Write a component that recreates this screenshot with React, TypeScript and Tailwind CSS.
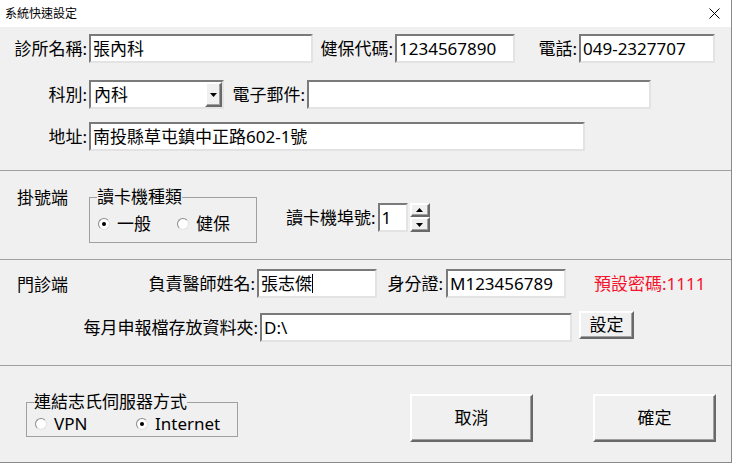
import type { ReactNode } from "react";

// 共用樣式：凹陷輸入框、凸起按鈕
const sunken =
  "bg-white border-2 border-t-[#7a7a7a] border-l-[#7a7a7a] border-r-[#e3e3e3] border-b-[#e3e3e3]";
const raised =
  "bg-[#f0f0f0] border-2 border-t-[#ffffff] border-l-[#ffffff] border-r-[#696969] border-b-[#696969] shadow-[inset_-1px_-1px_0_#a0a0a0]";

function Label({ children, className = "" }: { children: ReactNode; className?: string }) {
  return (
    <div className={`flex justify-end pr-[2px] text-[17px] leading-[20px] whitespace-nowrap ${className}`}>
      {children}
    </div>
  );
}

function TextBox({
  value,
  className = "",
  caret = false,
}: {
  value?: string;
  className?: string;
  caret?: boolean;
}) {
  return (
    <div className={`${sunken} h-[29px] flex items-center pl-[2px] text-[17px] leading-[20px] whitespace-nowrap ${className}`}>
      {value}
      {caret && <span className="w-px h-[19px] bg-black" />}
    </div>
  );
}

function Radio({ label, checked }: { label: string; checked?: boolean }) {
  return (
    <div className="flex items-center gap-[7px]">
      <span className="w-[12px] h-[12px] rounded-full bg-white border border-t-[#8a8a8a] border-l-[#8a8a8a] border-r-[#e0e0e0] border-b-[#e0e0e0] flex items-center justify-center">
        {checked && <span className="w-[4px] h-[4px] rounded-full bg-black" />}
      </span>
      <span className="text-[17px] leading-[20px]">{label}</span>
    </div>
  );
}

function Arrow({ up = false }: { up?: boolean }) {
  return (
    <svg width="7" height="4" viewBox="0 0 7 4" className="block">
      {up ? <path d="M3.5 0 L7 4 L0 4 Z" fill="#000" /> : <path d="M0 0 L7 0 L3.5 4 Z" fill="#000" />}
    </svg>
  );
}

function Divider() {
  return <div className="h-px bg-[#a0a0a0] w-full" />;
}

export default function App() {
  return (
    <div className="w-[734px] h-[465px] bg-white font-['Noto_Sans','Noto_Sans_CJK_TC',sans-serif] text-black">
      <div className="w-[732px] h-[463px] border-r border-b border-[#8a8a8a] flex flex-col">
        {/* 標題列 */}
        <div className="h-[27px] bg-white flex items-center justify-between pl-[5px] pr-[11px] shrink-0">
          <span className="text-[12px] leading-none">系統快速設定</span>
          <svg width="11" height="11" viewBox="0 0 11 11">
            <path d="M0.5 0.5 L10.5 10.5 M10.5 0.5 L0.5 10.5" stroke="#000" strokeWidth="1" />
          </svg>
        </div>

        <div className="flex-1 bg-[#f0f0f0] flex flex-col">
          {/* 診所基本資料 */}
          <div className="h-[143px] pt-[7px] shrink-0">
            <div className="flex items-center h-[29px]">
              <Label className="w-[89px]">診所名稱:</Label>
              <TextBox className="w-[224px]" value="張內科" />
              <Label className="w-[82px]">健保代碼:</Label>
              <TextBox className="w-[120px]" value="1234567890" />
              <Label className="w-[64px]">電話:</Label>
              <TextBox className="w-[136px]" value="049-2327707" />
            </div>
            <div className="flex items-center h-[29px] mt-[17px]">
              <Label className="w-[89px]">科別:</Label>
              <div className={`${sunken} w-[135px] h-[29px] flex`}>
                <div className="flex-1 flex items-center pl-[3px] text-[17px] leading-[20px]">內科</div>
                <div className={`${raised} w-[17px] h-full flex items-center justify-center`}>
                  <Arrow />
                </div>
              </div>
              <Label className="w-[83px]">電子郵件:</Label>
              <TextBox className="w-[344px]" />
            </div>
            <div className="flex items-center h-[29px] mt-[13px]">
              <Label className="w-[89px]">地址:</Label>
              <TextBox className="w-[496px]" value="南投縣草屯鎮中正路602-1號" />
            </div>
          </div>
          <Divider />

          {/* 掛號端 */}
          <div className="h-[88px] flex items-start shrink-0">
            <div className="w-[89px] pl-[17px] mt-[17px] text-[17px] leading-[20px]">掛號端</div>
            <fieldset className="w-[168px] h-[55px] mt-[17px] border border-[#a0a0a0] px-[7px]">
              <legend className="text-[17px] leading-[18px]">讀卡機種類</legend>
              <div className="flex items-center mt-[8px] ml-[1px]">
                <Radio label="一般" checked />
                <div className="ml-[26px]">
                  <Radio label="健保" />
                </div>
              </div>
            </fieldset>
            <div className="flex items-center h-[29px] mt-[32px] ml-[29px]">
              <Label>讀卡機埠號:</Label>
              <TextBox className="w-[30px]" value="1" />
              <div className="flex flex-col ml-[2px] w-[20px] h-[29px]">
                <div className={`${raised} h-[14px] flex items-center justify-center`}>
                  <Arrow up />
                </div>
                <div className={`${raised} h-[15px] flex items-center justify-center`}>
                  <Arrow />
                </div>
              </div>
            </div>
          </div>
          <Divider />

          {/* 門診端 */}
          <div className="h-[105px] pt-[9px] shrink-0">
            <div className="flex items-center h-[29px]">
              <div className="w-[89px] pl-[17px] text-[17px] leading-[20px] mt-[2px]">門診端</div>
              <Label className="w-[168px]">負責醫師姓名:</Label>
              <TextBox className="w-[120px]" value="張志傑" caret />
              <Label className="w-[69px] pr-[3px]">身分證:</Label>
              <TextBox className="w-[120px]" value="M123456789" />
              <div className="ml-[28px] text-[17px] leading-[20px] text-[#f5142d]">預設密碼:1111</div>
            </div>
            <div className="flex items-start mt-[13px]">
              <div className="w-[260px] h-[29px] mt-[2px] flex items-center justify-end pr-[2px] text-[17px] leading-[20px]">
                每月申報檔存放資料夾:
              </div>
              <TextBox className="w-[312px] mt-[2px]" value="D:\" />
              <button className={`${raised} ml-[7px] w-[55px] h-[28px] flex items-center justify-center text-[17px] leading-[20px]`}>
                設定
              </button>
            </div>
          </div>
          <Divider />

          {/* 連線方式與確認按鈕 */}
          <div className="flex-1 flex items-start pl-[26px]">
            <fieldset className="w-[212px] h-[44px] mt-[27px] border border-[#a0a0a0] px-[7px]">
              <legend className="text-[17px] leading-[18px]">連結志氏伺服器方式</legend>
              <div className="flex items-center mt-[3px] ml-[1px]">
                <div className="w-[101px]">
                  <Radio label="VPN" />
                </div>
                <Radio label="Internet" checked />
              </div>
            </fieldset>
            <button className={`${raised} ml-[172px] mt-[28px] w-[123px] h-[48px] flex items-center justify-center text-[17px] leading-[20px]`}>
              取消
            </button>
            <button className={`${raised} ml-[60px] mt-[28px] w-[123px] h-[48px] flex items-center justify-center text-[17px] leading-[20px]`}>
              確定
            </button>
          </div>
        </div>
      </div>
    </div>
  );
}
